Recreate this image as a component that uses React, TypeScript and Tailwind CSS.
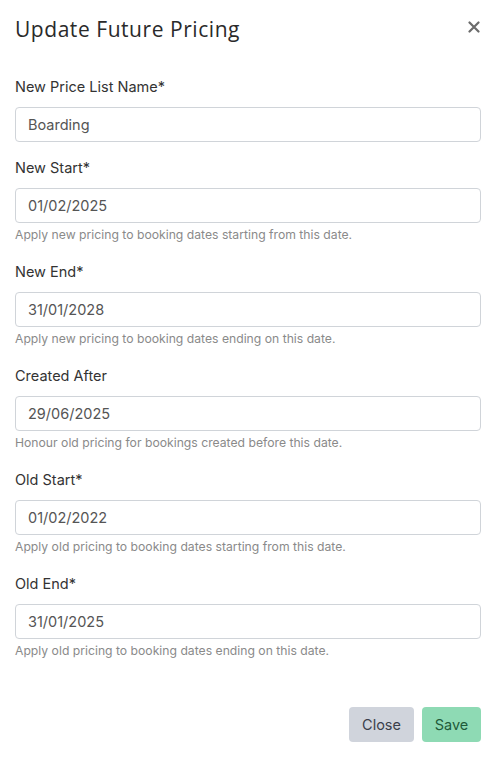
import React from "react";

const fields = [
  { label: "New Price List Name*", value: "Boarding", help: "" },
  { label: "New Start*", value: "01/02/2025", help: "Apply new pricing to booking dates starting from this date." },
  { label: "New End*", value: "31/01/2028", help: "Apply new pricing to booking dates ending on this date." },
  { label: "Created After", value: "29/06/2025", help: "Honour old pricing for bookings created before this date." },
  { label: "Old Start*", value: "01/02/2022", help: "Apply old pricing to booking dates starting from this date." },
  { label: "Old End*", value: "31/01/2025", help: "Apply old pricing to booking dates ending on this date." },
];

export default function App() {
  return (
    <div className="w-[496px] h-[757px] bg-white font-['Inter',sans-serif] text-[#212529]">
      <div className="flex items-start justify-between pl-[15px] pr-[15px] pt-[15px]">
        <h1 className="font-['Open_Sans',sans-serif] text-[21px] leading-[28px] tracking-[0.55px] text-[#2a2a2a]">
          Update Future Pricing
        </h1>
        <button className="mt-[6px] mr-[1px] text-[#6b6b6b]">
          <svg width="12" height="12" viewBox="0 0 12 12">
            <path d="M1.5 1.5 L10.5 10.5 M10.5 1.5 L1.5 10.5" stroke="currentColor" strokeWidth="2.2" strokeLinecap="round" />
          </svg>
        </button>
      </div>
      <div className="px-[15px] pt-[34px]">
        {fields.map((f) => (
          <div key={f.label} className={f.help ? "mb-[19px]" : "mb-[16px]"}>
            <div className="text-[14.5px] leading-[20px] text-[#333] mb-[10px]">{f.label}</div>
            <div className="h-[35px] border border-[#d0d4d9] rounded-[4px] flex items-center px-[12px] text-[14.5px] text-[#555]">
              {f.value}
            </div>
            {f.help && (
              <div className="mt-[4px] text-[12.2px] leading-[16px] text-[#8a8a8a]">{f.help}</div>
            )}
          </div>
        ))}
      </div>
      <div className="flex justify-end gap-[8px] px-[15px] pt-[29px]">
        <button className="h-[35px] w-[65px] rounded-[4px] bg-[#d0d4dc] text-[#3a3f4a] text-[14.5px]">Close</button>
        <button className="h-[35px] w-[59px] rounded-[4px] bg-[#8edab4] text-[#1f5a3a] text-[14.5px]">Save</button>
      </div>
    </div>
  );
}
